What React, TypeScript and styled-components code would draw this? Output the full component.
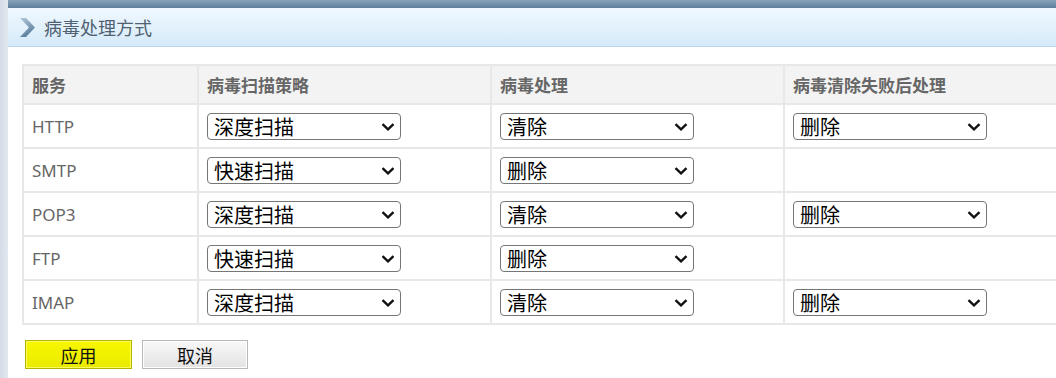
import React, { FunctionComponent } from 'react';
import styled, { createGlobalStyle } from 'styled-components';

const GlobalStyle = createGlobalStyle`
  html, body {
    margin: 0;
    padding: 0;
    background: #fff;
    overflow: hidden;
  }
  body {
    font-family: "Noto Sans", "Noto Sans CJK SC", sans-serif;
  }
`;

const Page = styled.div`
  display: flex;
  width: 1056px;
  height: 378px;
  overflow: hidden;
`;

const LeftStrip = styled.div`
  flex: 0 0 8px;
  background: linear-gradient(to right, #d3dce6, #e2e9f0);
`;

const Main = styled.div`
  flex: 1;
  display: flex;
  flex-direction: column;
  min-width: 0;
`;

const TopBar = styled.div`
  height: 8px;
  background: linear-gradient(to bottom, #88a3ba, #5f7f9b);
`;

const PanelHeader = styled.div`
  height: 38px;
  display: flex;
  align-items: center;
  padding-left: 11px;
  background: linear-gradient(to bottom, #f0f8fe, #d5eaf9);
  border-bottom: 1px solid #b9d8ee;
`;

const PanelTitle = styled.span`
  margin-left: 8px;
  font-family: "Noto Sans CJK SC", sans-serif;
  font-size: 18px;
  color: #4f6172;
  line-height: 1;
`;

const Content = styled.div`
  padding: 17px 0 0 14px;
`;

const Table = styled.table`
  border-collapse: collapse;
  width: 1076px;
  table-layout: fixed;
  border-top: 2px solid #e8e8e8;
  border-left: 2px solid #e8e8e8;
`;

const HeadCell = styled.th<{ $w?: number }>`
  width: ${p => (p.$w ? `${p.$w}px` : 'auto')};
  height: 37px;
  padding: 0 0 0 8px;
  text-align: left;
  background: #f3f3f3;
  border: 2px solid #e8e8e8;
  border-top: none;
  font-family: "Noto Sans CJK SC", sans-serif;
  font-size: 17px;
  font-weight: bold;
  color: #666;
`;

const Cell = styled.td`
  height: 42px;
  padding: 0 0 0 8px;
  border: 2px solid #e8e8e8;
  font-size: 17px;
  color: #666;
`;

const SelectWrap = styled.span`
  position: relative;
  display: inline-block;
  vertical-align: middle;
`;

const Select = styled.select`
  display: block;
  width: 194px;
  height: 27px;
  padding: 0 0 0 6px;
  border: 1px solid #767676;
  border-radius: 4px;
  background: #fff;
  appearance: none;
  font-family: "Noto Sans CJK SC", sans-serif;
  font-size: 20px;
  line-height: 25px;
  color: #000;
`;

const Caret = styled.svg`
  position: absolute;
  right: 6px;
  top: 10px;
  pointer-events: none;
`;

const Actions = styled.div`
  display: flex;
  gap: 10px;
  padding: 15px 0 0 3px;
`;

const Button = styled.button<{ $primary?: boolean }>`
  width: ${p => (p.$primary ? '107px' : '106px')};
  height: 29px;
  padding: 0;
  font-family: "Noto Sans CJK SC", sans-serif;
  font-size: 18px;
  line-height: 1;
  color: #111;
  border: 1px solid ${p => (p.$primary ? '#b5b500' : '#b9b9b9')};
  background: ${p =>
    p.$primary
      ? 'linear-gradient(to bottom, #f7f700, #eaea00)'
      : 'linear-gradient(to bottom, #f8f8f8, #e3e3e3)'};
  box-shadow: inset 0 0 0 1px ${p => (p.$primary ? '#fbfb60' : '#fdfdfd')};
`;

const Chevron: FunctionComponent = () => (
  <svg width="17" height="21" viewBox="0 0 17 21">
    <defs>
      <linearGradient id="chev" x1="0" y1="0" x2="0.4" y2="1">
        <stop offset="0" stopColor="#b3c7d8" />
        <stop offset="1" stopColor="#5a7f9d" />
      </linearGradient>
    </defs>
    <path d="M1 1 L7 1 L16 10.5 L7 20 L1 20 L10 10.5 Z" fill="url(#chev)" />
  </svg>
);

interface Row {
  service: string;
  scan: string;
  action: string;
  fail?: string;
}

const rows: Row[] = [
  { service: 'HTTP', scan: '深度扫描', action: '清除', fail: '删除' },
  { service: 'SMTP', scan: '快速扫描', action: '删除' },
  { service: 'POP3', scan: '深度扫描', action: '清除', fail: '删除' },
  { service: 'FTP', scan: '快速扫描', action: '删除' },
  { service: 'IMAP', scan: '深度扫描', action: '清除', fail: '删除' },
];

const Choice: FunctionComponent<{ value: string; options: string[] }> = ({ value, options }) => (
  <SelectWrap>
    <Select defaultValue={value}>
      {options.map(o => (
        <option key={o} value={o}>
          {o}
        </option>
      ))}
    </Select>
    <Caret width="14" height="8" viewBox="0 0 14 8">
      <path d="M1.5 1.2 L7 6.3 L12.5 1.2" fill="none" stroke="#111" strokeWidth="2.4" />
    </Caret>
  </SelectWrap>
);

const App: FunctionComponent = () => (
  <Page>
    <GlobalStyle />
    <LeftStrip />
    <Main>
      <TopBar />
      <PanelHeader>
        <Chevron />
        <PanelTitle>病毒处理方式</PanelTitle>
      </PanelHeader>
      <Content>
        <Table>
          <thead>
            <tr>
              <HeadCell $w={165}>服务</HeadCell>
              <HeadCell $w={283}>病毒扫描策略</HeadCell>
              <HeadCell $w={283}>病毒处理</HeadCell>
              <HeadCell>病毒清除失败后处理</HeadCell>
            </tr>
          </thead>
          <tbody>
            {rows.map(r => (
              <tr key={r.service}>
                <Cell>{r.service}</Cell>
                <Cell>
                  <Choice value={r.scan} options={['深度扫描', '快速扫描']} />
                </Cell>
                <Cell>
                  <Choice value={r.action} options={['清除', '删除']} />
                </Cell>
                <Cell>{r.fail && <Choice value={r.fail} options={['删除', '隔离']} />}</Cell>
              </tr>
            ))}
          </tbody>
        </Table>
        <Actions>
          <Button $primary>应用</Button>
          <Button>取消</Button>
        </Actions>
      </Content>
    </Main>
  </Page>
);

export default App;
